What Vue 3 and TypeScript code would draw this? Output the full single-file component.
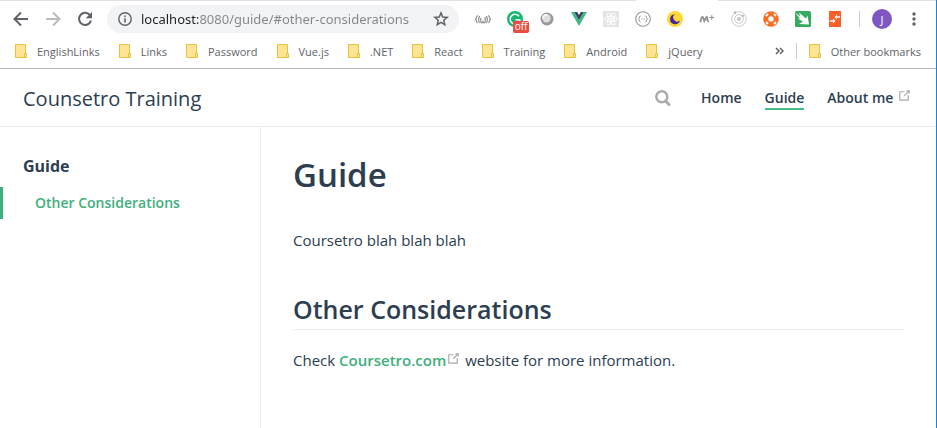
<script setup lang="ts">
import { ref } from 'vue'

interface Bookmark {
  id: number
  label: string
}

const address = ref<string>('localhost:8080/guide/#other-considerations')

const bookmarks: Bookmark[] = [
  'EnglishLinks',
  'Links',
  'Password',
  'Vue.js',
  '.NET',
  'React',
  'Training',
  'Android',
  'jQuery',
].map((label, id) => ({ id, label }))

const extensions: string[] = [
  'braces', 'grammar', 'orb', 'vue', 'react', 'json',
  'moon', 'movistar', 'orbit', 'lifebuoy', 'swift', 'git',
]
</script>

<template>
  <div class="window">
    <header class="chrome">
      <div class="tab-edge"><span class="edge-left"></span><span class="edge-tab"></span><span class="edge-right"></span></div>
      <div class="toolbar">
        <div class="nav-buttons">
          <button type="button" class="tool" aria-label="Back">
            <svg width="16" height="16" viewBox="0 0 16 16" fill="none" stroke="#5f6368" stroke-width="2"><path d="M15 8H2M8 1.5 1.5 8 8 14.5" /></svg>
          </button>
          <button type="button" class="tool" aria-label="Forward" disabled>
            <svg width="16" height="16" viewBox="0 0 16 16" fill="none" stroke="#b9bbbe" stroke-width="2"><path d="M1 8h13M8 1.5 14.5 8 8 14.5" /></svg>
          </button>
          <button type="button" class="tool" aria-label="Reload">
            <svg width="16" height="16" viewBox="0 0 16 16"><path d="M13.2 4.4A6.1 6.1 0 1 0 14 9.6" fill="none" stroke="#5f6368" stroke-width="2" /><path d="M15 1v6.3H8.7z" fill="#5f6368" /></svg>
          </button>
        </div>

        <div class="omnibox">
          <svg class="info" width="16" height="16" viewBox="0 0 16 16"><circle cx="8" cy="8" r="6.2" fill="none" stroke="#5f6368" stroke-width="1.4" /><path d="M7.2 7.2h1.6v4.2H7.2zM7.2 4.5h1.6v1.6H7.2z" fill="#5f6368" /></svg>
          <input v-model="address" class="address" type="text" aria-label="Address" spellcheck="false" />
          <button type="button" class="star" aria-label="Bookmark this page">
            <svg width="16" height="16" viewBox="0 0 16 16"><path d="M8 1.9 9.7 6l4.5.4-3.4 2.9 1 4.4L8 11.4l-3.8 2.3 1-4.4-3.4-2.9L6.3 6z" fill="none" stroke="#5f6368" stroke-width="1.5" /></svg>
          </button>
        </div>

        <div class="extensions">
          <button v-for="name in extensions" :key="name" type="button" class="tool" :aria-label="name">
            <svg v-if="name === 'braces'" width="16" height="16" viewBox="0 0 16 16" fill="none" stroke="#8f8f8f" stroke-width="1.2"><path d="M3 4.500C1 5 2 7 .5 8.200 2 9.500 1 11 2.500 12M4.600 5c-1 2-1.200 5 0 7M13 4.500c2 .5 1 2.500 2.500 3.700-1.500 1.300-.5 2.800-2 3.800M11.400 5c1 2 1.200 5 0 7M5.800 7v3.500c0 2 2.200 2 2.200-.8 0 2.800 2.200 2.800 2.200.8V6" /></svg>
            <svg v-else-if="name === 'grammar'" width="16" height="16" viewBox="0 0 16 16"><circle cx="8" cy="8" r="8" fill="#15b66d" /><path d="M12 5.300A4.900 4.900 0 1 0 12.600 10M8.500 8.800h4.200v3" fill="none" stroke="#fff" stroke-width="1.600" /></svg>
            <svg v-else-if="name === 'orb'" width="16" height="16" viewBox="0 0 16 16"><circle cx="8" cy="8" r="6.500" fill="#999" /><circle cx="7.500" cy="7.300" r="4.200" fill="#dedede" /><path d="M4 7.500A3.600 3.600 0 0 1 8 3.700" fill="none" stroke="#fff" stroke-width="1.500" /></svg>
            <svg v-else-if="name === 'vue'" width="16" height="16" viewBox="0 0 16 16"><path d="M0 1h3.200L8 9.300 12.800 1H16L8 15z" fill="#41b883" /><path d="M3.200 1h3L8 4l1.800-3h3L8 9.300z" fill="#34495e" /></svg>
            <svg v-else-if="name === 'react'" width="16" height="16" viewBox="0 0 16 16"><path d="M0 0h16v16H0z" fill="#e4e4e4" /><g fill="none" stroke="#fff" stroke-width=".9"><ellipse cx="8" cy="8" rx="6.500" ry="2.500" /><ellipse cx="8" cy="8" rx="6.500" ry="2.500" transform="rotate(60 8 8)" /><ellipse cx="8" cy="8" rx="6.500" ry="2.500" transform="rotate(120 8 8)" /></g><circle cx="8" cy="8" r="1.300" fill="#fff" /></svg>
            <svg v-else-if="name === 'json'" width="16" height="16" viewBox="0 0 16 16"><circle cx="8" cy="8" r="7.300" fill="#fff" stroke="#999" stroke-width="1.100" /><path d="M5.500 5C4 5 5 7.500 3.500 8 5 8.500 4 11 5.500 11M10.500 5c1.500 0 .5 2.500 2 3-1.500.5-.5 3-2 3" fill="none" stroke="#888" /><path d="M6.300 8h.9M7.600 8h.9M8.900 8h.9" stroke="#aaa" /></svg>
            <svg v-else-if="name === 'moon'" width="16" height="16" viewBox="0 0 16 16"><circle cx="8" cy="8" r="8" fill="#fdd835" /><path d="M7.800 3.200a5 5 0 1 0 5.100 6.300A4 4 0 0 1 7.800 3.200z" fill="#4527a0" /></svg>
            <svg v-else-if="name === 'movistar'" width="16" height="16" viewBox="0 0 16 16" fill="none" stroke="#969696" stroke-linecap="round"><path d="M1.500 10.500C2 7.500 3.200 5 4 6.300L5.300 10 7.500 6C8.500 4.800 8 10.500 9.300 10.300" stroke-width="1.900" /><path d="M12.800 4.500v4M10.800 6.500h4" stroke-width="1.100" /></svg>
            <svg v-else-if="name === 'orbit'" width="16" height="16" viewBox="0 0 16 16" fill="none" stroke="#ccc"><circle cx="8" cy="8" r="7.300" /><circle cx="8" cy="8" r="4.300" /><circle cx="8" cy="8" r="2" fill="#c4c4c4" stroke="none" /><circle cx="4" cy="1.700" r="1.400" fill="#bbb" stroke="none" /><circle cx="11.700" cy="4.800" r="1.300" fill="#bbb" stroke="none" /></svg>
            <svg v-else-if="name === 'lifebuoy'" width="16" height="16" viewBox="0 0 16 16"><circle cx="8" cy="8" r="7.800" fill="#f96f22" /><circle cx="8" cy="8" r="2.700" fill="#fff" /><path d="m3 5 2-2M11 3l2 2M3 11l2 2M11 13l2-2" stroke="#fff" stroke-width="2" /></svg>
            <svg v-else-if="name === 'swift'" width="16" height="16" viewBox="0 0 16 16"><rect width="16" height="16" rx="1.500" fill="#36ab60" /><path d="M0 1.500 5.500 5.500 4 1.500 11 7.500 12.500 4.500 14 13.500 4 13 8 10.500 2.500 7.500 5 7.500z" fill="#fff" /></svg>
            <svg v-else width="16" height="16" viewBox="0 0 16 16"><path d="M2 0h12v16H2z" fill="#fc6028" /><path d="M9.500 6H13M3 10h3.500" stroke="#fff" stroke-width="1.300" /><path d="M7.500 6 10 3.500v5zM8.500 10 6 7.500v5z" fill="#fff" /></svg>
            <span v-if="name === 'grammar'" class="off">off</span>
          </button>
        </div>

        <span class="divider"></span>
        <button type="button" class="avatar" aria-label="Profile">J</button>
        <button type="button" class="tool" aria-label="Menu">
          <svg width="16" height="16" viewBox="0 0 16 16" fill="#5f6368"><circle cx="8" cy="3" r="1.700" /><circle cx="8" cy="8" r="1.700" /><circle cx="8" cy="13" r="1.700" /></svg>
        </button>
      </div>

      <nav class="bookmarks" aria-label="Bookmarks">
        <a v-for="b in bookmarks" :key="b.id" href="#" class="bookmark">
          <svg width="12" height="14" viewBox="0 0 12 14"><path d="M.5.5h10v13H.5z" fill="#ffe494" stroke="#e9c340" /><path d="M9.500 9.500h2v4h-2z" fill="#ffe494" stroke="#e9c340" /></svg>
          <span>{{ b.label }}</span>
        </a>
        <div class="overflow">
          <button type="button" class="more" aria-label="More bookmarks">
            <svg width="9" height="8" viewBox="0 0 9 8" fill="none" stroke="#5f6368" stroke-width="1.500"><path d="m1 1 3 3-3 3M5 1l3 3-3 3" /></svg>
          </button>
          <span class="divider"></span>
          <a href="#" class="bookmark">
            <svg width="12" height="14" viewBox="0 0 12 14"><path d="M.5.5h10v13H.5z" fill="#ffe494" stroke="#e9c340" /><path d="M9.500 9.500h2v4h-2z" fill="#ffe494" stroke="#e9c340" /></svg>
            <span>Other bookmarks</span>
          </a>
        </div>
      </nav>
    </header>

    <header class="site-header">
      <a href="#" class="site-name">Counsetro Training</a>
      <nav class="site-nav" aria-label="Site">
        <button type="button" class="search" aria-label="Search">
          <svg width="16" height="17" viewBox="0 0 16 17" fill="none" stroke="#aaa"><circle cx="6.800" cy="6.800" r="5.500" stroke-width="2.500" /><path d="m10.800 11 4 4.500" stroke-width="2.800" /></svg>
        </button>
        <a href="#" class="nav-link">Home</a>
        <a href="#" class="nav-link active">Guide</a>
        <a href="#" class="nav-link">About me <svg class="outbound" width="15" height="15" viewBox="0 0 100 100" fill="#aaa"><path d="M18.800 85.100h56c2.200 0 4-1.800 4-4v-32h-8v28h-48v-48h28v-8h-32c-2.200 0-4 1.800-4 4v56c0 2.200 1.800 4 4 4z" /><path d="M45.700 48.700l5.600 5.600 25.900-25.800v8.700h8V14.900H62.800v8h8.700z" /></svg></a>
      </nav>
    </header>

    <div class="page">
      <aside class="sidebar">
        <p class="group">Guide</p>
        <a href="#" class="side-link">Other Considerations</a>
      </aside>
      <main class="content">
        <h1>Guide</h1>
        <p>Coursetro blah blah blah</p>
        <h2>Other Considerations</h2>
        <p>Check <a href="#" class="link">Coursetro.com<svg class="outbound" width="15" height="15" viewBox="0 0 100 100" fill="#aaa"><path d="M18.800 85.100h56c2.200 0 4-1.800 4-4v-32h-8v28h-48v-48h28v-8h-32c-2.200 0-4 1.800-4 4v56c0 2.200 1.800 4 4 4z" /><path d="M45.700 48.700l5.600 5.600 25.900-25.800v8.700h8V14.900H62.800v8h8.700z" /></svg></a> website for more information.</p>
      </main>
    </div>
  </div>
</template>

<style>
body {
  margin: 0;
  background: #fff;
}
</style>

<style scoped>
.window {
  box-sizing: border-box;
  min-height: 100vh;
  display: flex;
  flex-direction: column;
  border-right: 1px solid #1883d7;
  font-family: "Open Sans", "Noto Sans", sans-serif;
  color: #2c3e50;
  overflow: hidden;
}
a {
  color: inherit;
  text-decoration: none;
}
button {
  display: flex;
  align-items: center;
  justify-content: center;
  padding: 0;
  border: 0;
  background: none;
  font: inherit;
}
svg {
  display: block;
  flex: none;
}
.chrome {
  border-bottom: 1px solid #b6b4b6;
}
.tab-edge {
  display: flex;
  height: 1px;
}
.edge-left {
  flex: 636;
  background: #dee1e6;
}
.edge-tab {
  flex: 82;
}
.edge-right {
  flex: 218;
  background: #dee1e6;
}
.toolbar {
  display: flex;
  align-items: center;
  height: 36px;
  padding: 0 6px 0 5px;
}
.nav-buttons,
.extensions {
  display: flex;
}
.tool {
  position: relative;
  width: 32px;
  height: 28px;
}
.omnibox {
  flex: 1;
  min-width: 0;
  display: flex;
  align-items: center;
  height: 28px;
  margin: 0 8px 0 6px;
  padding: 0 10px;
  box-sizing: border-box;
  border-radius: 14px;
  background: #f1f3f4;
}
.address {
  flex: 1;
  min-width: 0;
  margin: 0 8px;
  padding: 0;
  border: 0;
  outline: 0;
  font: 13px "Noto Sans", "Open Sans", sans-serif;
  color: transparent;
  background: linear-gradient(90deg, #202124 57px, #80868b 57px);
  background-clip: text;
  -webkit-background-clip: text;
}
.off {
  position: absolute;
  left: 14px;
  top: 16px;
  width: 16px;
  height: 12px;
  border-radius: 2px;
  background: #ea4c40;
  color: #fff;
  font-size: 10px;
  line-height: 11px;
  text-align: center;
}
.divider {
  width: 1px;
  height: 16px;
  background: #c8cacd;
}
.toolbar .divider {
  margin: 0 12px 0 8px;
}
.avatar {
  width: 20px;
  height: 20px;
  margin-right: 6px;
  border-radius: 50%;
  background: #7e57c2;
  color: #fff;
  font-size: 11px;
}
.bookmarks {
  display: flex;
  align-items: center;
  height: 28px;
  padding: 0 15px 3px;
  gap: 19px;
  font-size: 11px;
  color: #5f6368;
  white-space: nowrap;
}
.bookmark {
  display: flex;
  align-items: center;
  gap: 10px;
}
.overflow {
  display: flex;
  align-items: center;
  gap: 12px;
  margin-left: auto;
}
.site-header {
  display: flex;
  align-items: center;
  justify-content: space-between;
  height: 55px;
  padding: 2px 24px 0 23px;
  border-bottom: 1px solid #eaecef;
}
.site-name {
  font-size: 20px;
  font-weight: 500;
}
.site-nav {
  display: flex;
  align-items: center;
  gap: 23px;
  font-size: 14px;
  font-weight: 600;
}
.search {
  margin-right: 7px;
}
.nav-link {
  line-height: 20px;
  border-bottom: 2px solid transparent;
}
.nav-link.active {
  border-color: #46bd87;
}
.outbound {
  display: inline-block;
  vertical-align: middle;
  position: relative;
  top: -3px;
}
.page {
  flex: 1;
  display: flex;
}
.sidebar {
  width: 260px;
  flex: none;
  padding-top: 24px;
  border-right: 1px solid #eaecef;
}
.group {
  margin: 0 0 5px;
  padding-left: 23px;
  font-size: 16px;
  font-weight: 700;
  line-height: 31px;
}
.side-link {
  display: block;
  padding-left: 32px;
  border-left: 3px solid #3eaf7c;
  color: #3eaf7c;
  font-size: 14px;
  font-weight: 600;
  line-height: 32px;
}
.content {
  flex: 1;
  padding: 24px 32px 32px;
}
h1 {
  margin: 0 0 27px;
  font-size: 33px;
  font-weight: 600;
  line-height: 48px;
}
h2 {
  margin: 37px 0 16px;
  padding-bottom: 2px;
  border-bottom: 1px solid #eaecef;
  font-size: 25px;
  font-weight: 600;
  line-height: 36px;
}
.content p {
  margin: 0;
  font-size: 15px;
  line-height: 28px;
}
.link {
  color: #3eaf7c;
  font-weight: 600;
}
</style>
